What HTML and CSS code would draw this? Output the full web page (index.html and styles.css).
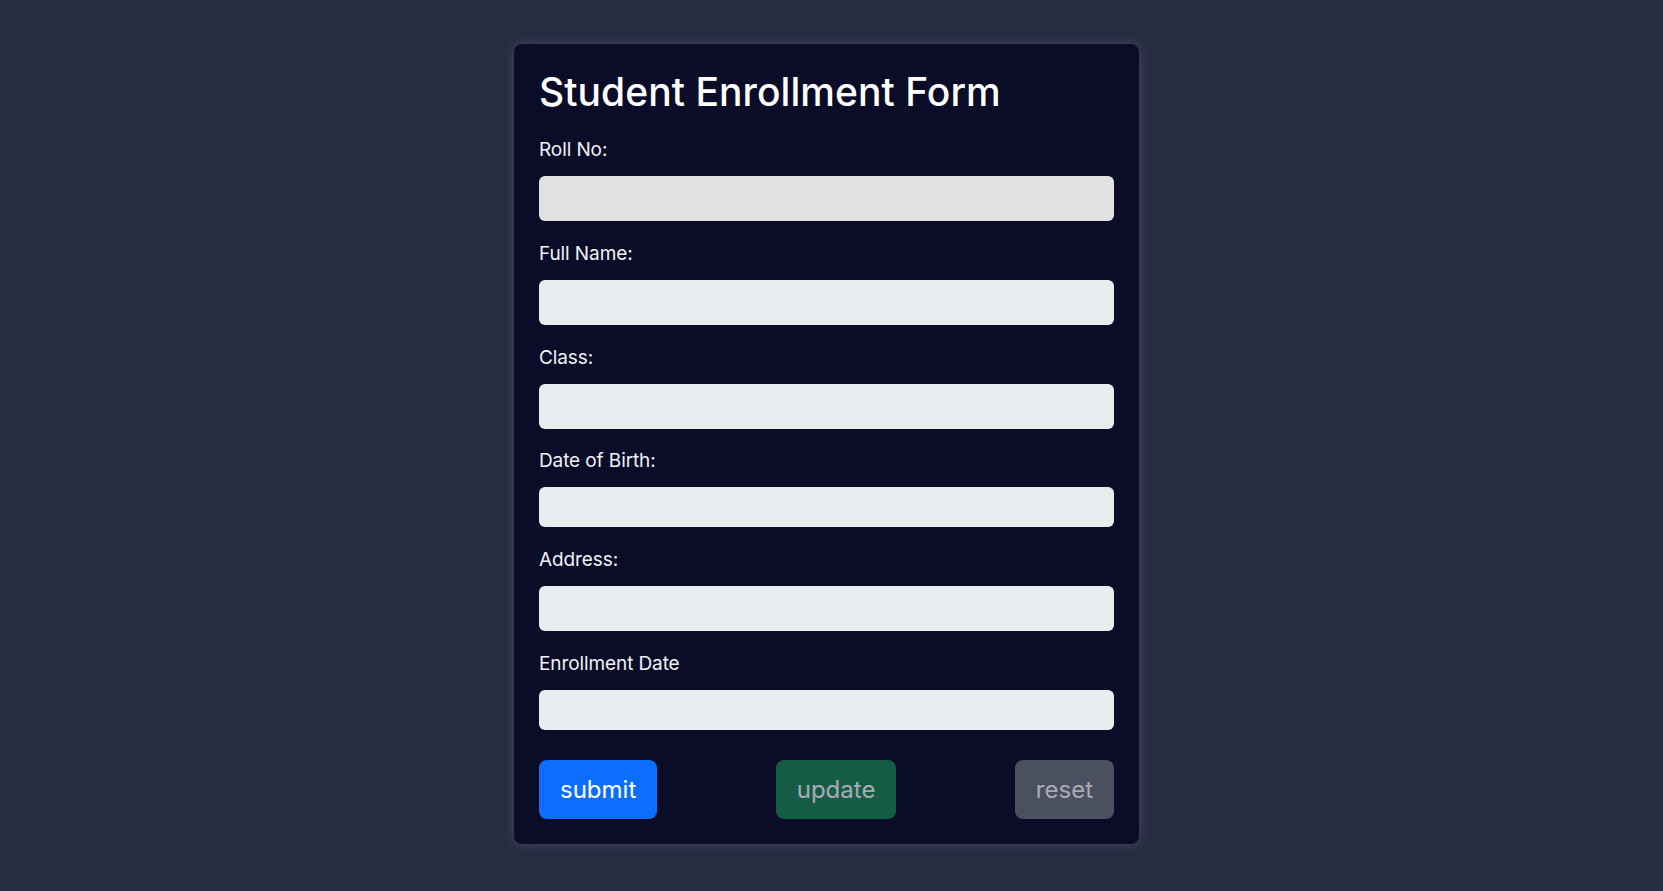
FILE: index.html
```html
<!DOCTYPE html>
<html lang="en">
<head>
<meta charset="utf-8">
<title>Student Enrollment Form</title>
<link rel="stylesheet" href="styles.css">
</head>
<body>
<main class="page">
  <form class="card">
    <h1 class="title">Student Enrollment Form</h1>
    <label class="label" for="roll">Roll No:</label>
    <input class="field field-readonly" id="roll" type="text" readonly>
    <label class="label" for="name">Full Name:</label>
    <input class="field" id="name" type="text">
    <label class="label" for="cls">Class:</label>
    <input class="field" id="cls" type="text">
    <label class="label" for="dob">Date of Birth:</label>
    <input class="field field-date" id="dob" type="text">
    <label class="label" for="addr">Address:</label>
    <input class="field" id="addr" type="text">
    <label class="label" for="enr">Enrollment Date</label>
    <input class="field field-date field-last" id="enr" type="text">
    <div class="actions">
      <button type="button" class="btn btn-primary">submit</button>
      <button type="button" class="btn btn-success btn-disabled">update</button>
      <button type="button" class="btn btn-secondary btn-disabled">reset</button>
    </div>
  </form>
</main>
</body>
</html>
```
FILE: styles.css
```css
html, body {
  margin: 0;
  padding: 0;
  background: #282c41;
  height: 100%;
}

body {
  font-family: "Inter", "Roboto", "Liberation Sans", sans-serif;
  color: #ffffff;
}

.page {
  display: flex;
  justify-content: center;
  align-items: flex-start;
  padding: 44px 10px 0 0;
}

.card {
  display: flex;
  flex-direction: column;
  width: 575px;
  padding: 25px;
  background: #0b0c27;
  border-radius: 8px;
  box-shadow: 0 0 12px rgba(170, 175, 210, 0.22);
}

.title {
  margin: 0 0 23px;
  font-size: 39px;
  line-height: 46px;
  font-weight: 500;
  color: #ffffff;
  letter-spacing: 0.05px;
}

.label {
  display: block;
  font-size: 19px;
  line-height: 24px;
  margin-bottom: 14px;
  color: #f1f1f6;
  letter-spacing: -0.1px;
}

.field {
  display: block;
  box-sizing: border-box;
  width: 100%;
  height: 45px;
  margin: 0 0 20.75px;
  border: none;
  border-radius: 6px;
  background: #e8ecef;
  outline: none;
}

.field-readonly {
  background: #e1e1e1;
}

.field-date {
  height: 40px;
}

.field-last {
  margin-bottom: 30px;
}

.actions {
  display: flex;
  justify-content: space-between;
  align-items: center;
}

.btn {
  font-family: "Inter", "Roboto", "Liberation Sans", sans-serif;
  font-size: 24px;
  line-height: 29px;
  padding: 15px 21px;
  border: none;
  border-radius: 8px;
  color: #ffffff;
  cursor: pointer;
  letter-spacing: 0;
}

.btn-primary {
  background: #0d6efd;
}

.btn-success {
  background: #198754;
}

.btn-secondary {
  background: #6c757d;
}

.btn-disabled {
  opacity: 0.65;
}
```
